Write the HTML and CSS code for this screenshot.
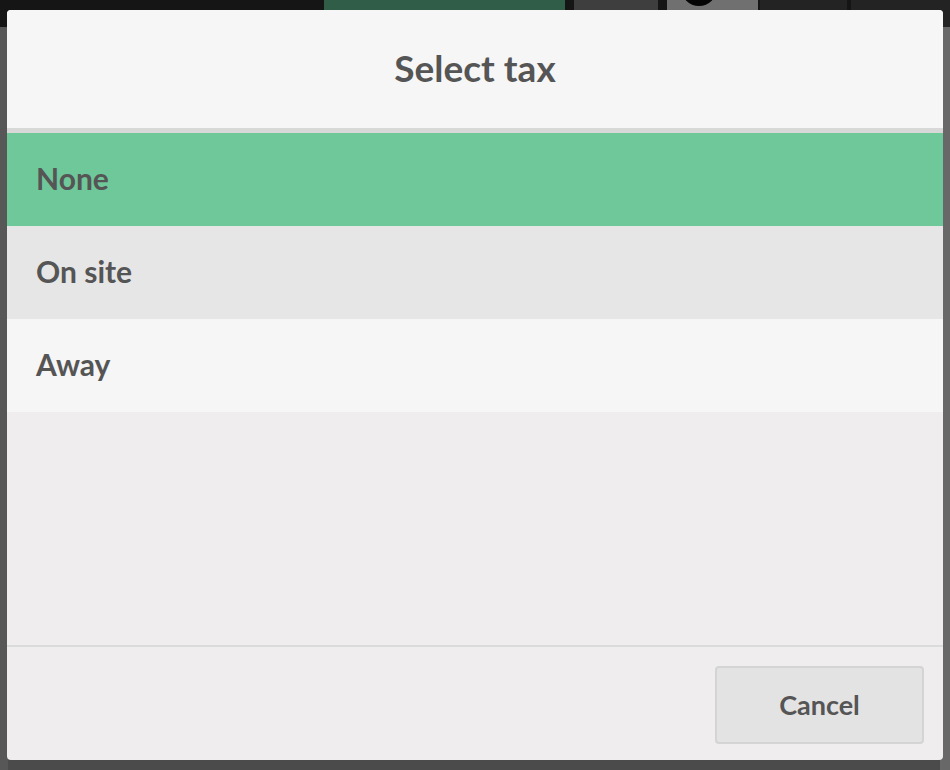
FILE: index.html
```html
<!DOCTYPE html>
<html lang="en">
<head>
<meta charset="utf-8">
<title>Select tax</title>
<link rel="stylesheet" href="styles.css">
</head>
<body>
<div class="app">
  <div class="topbar">
    <div class="tb-fill"></div>
    <div class="tb-green"></div>
    <div class="tb-gray"></div>
    <div class="tb-light"><span class="tb-dot"></span></div>
    <div class="tb-dark"></div>
    <div class="tb-dark tb-last"></div>
  </div>
  <div class="app-body"></div>
</div>

<div class="modal">
  <div class="modal-header">
    <h1 class="modal-title">Select tax</h1>
  </div>
  <div class="modal-list">
    <div class="item item-selected">None</div>
    <div class="item item-hover">On site</div>
    <div class="item">Away</div>
  </div>
  <div class="modal-footer">
    <button class="btn-cancel">Cancel</button>
  </div>
</div>
</body>
</html>
```

FILE: styles.css
```css
html, body {
  margin: 0;
  padding: 0;
}
body {
  width: 950px;
  height: 770px;
  overflow: hidden;
  background: #4b4b4b;
  font-family: Lato, "Open Sans", "Liberation Sans", sans-serif;
  position: relative;
}
.app {
  display: flex;
  flex-direction: column;
  height: 770px;
}
.topbar {
  height: 27px;
  display: flex;
  background: #151515;
}
.tb-fill { width: 324px; }
.tb-green { width: 241px; background: #2f5d47; }
.tb-gray { width: 84px; margin-left: 9px; background: #3e3e3e; }
.tb-light {
  width: 91px;
  margin-left: 9px;
  background: #707070;
  position: relative;
  overflow: hidden;
}
.tb-dot {
  position: absolute;
  left: 14px;
  top: -30px;
  width: 36px;
  height: 36px;
  border-radius: 50%;
  background: #050505;
}
.tb-dark { width: 87px; margin-left: 2px; background: #232323; }
.tb-last { flex: 1; margin-left: 4px; }
.app-body {
  flex: 1;
  background: linear-gradient(to right, #575757 0, #575757 8px, #4b4b4b 8px, #4b4b4b 940px, #686868 940px);
}

.modal {
  position: absolute;
  left: 7px;
  top: 10px;
  width: 936px;
  height: 750px;
  background: #efeded;
  border-radius: 4px;
  overflow: hidden;
  display: flex;
  flex-direction: column;
}
.modal-header {
  background: #f6f6f6;
  border-bottom: 5px solid #d8d8d8;
  display: flex;
  align-items: center;
  justify-content: center;
  box-sizing: border-box;
  height: 123px;
  padding-bottom: 4px;
}
.modal-title {
  margin: 0;
  font-size: 37px;
  font-weight: 700;
  color: #555555;
}
.modal-list {
  flex: 1;
  display: flex;
  flex-direction: column;
  border-bottom: 2px solid #dcdbdb;
}
.item {
  height: 93px;
  box-sizing: border-box;
  display: flex;
  align-items: center;
  padding-left: 29px;
  padding-bottom: 4px;
  background: #f6f6f6;
  font-size: 30px;
  font-weight: 700;
  color: #555555;
}
.item-selected { background: #6fc899; }
.item-hover { background: #e6e6e6; }
.modal-footer {
  height: 113px;
  display: flex;
  align-items: center;
  justify-content: flex-end;
  padding-right: 19px;
  padding-top: 3px;
  box-sizing: border-box;
}
.btn-cancel {
  width: 209px;
  height: 78px;
  background: #e4e3e3;
  border: 2px solid #d5d4d4;
  border-radius: 4px;
  font-family: Lato, "Open Sans", "Liberation Sans", sans-serif;
  font-size: 27px;
  font-weight: 700;
  color: #555555;
  padding: 0 0 2px 0;
}
```
